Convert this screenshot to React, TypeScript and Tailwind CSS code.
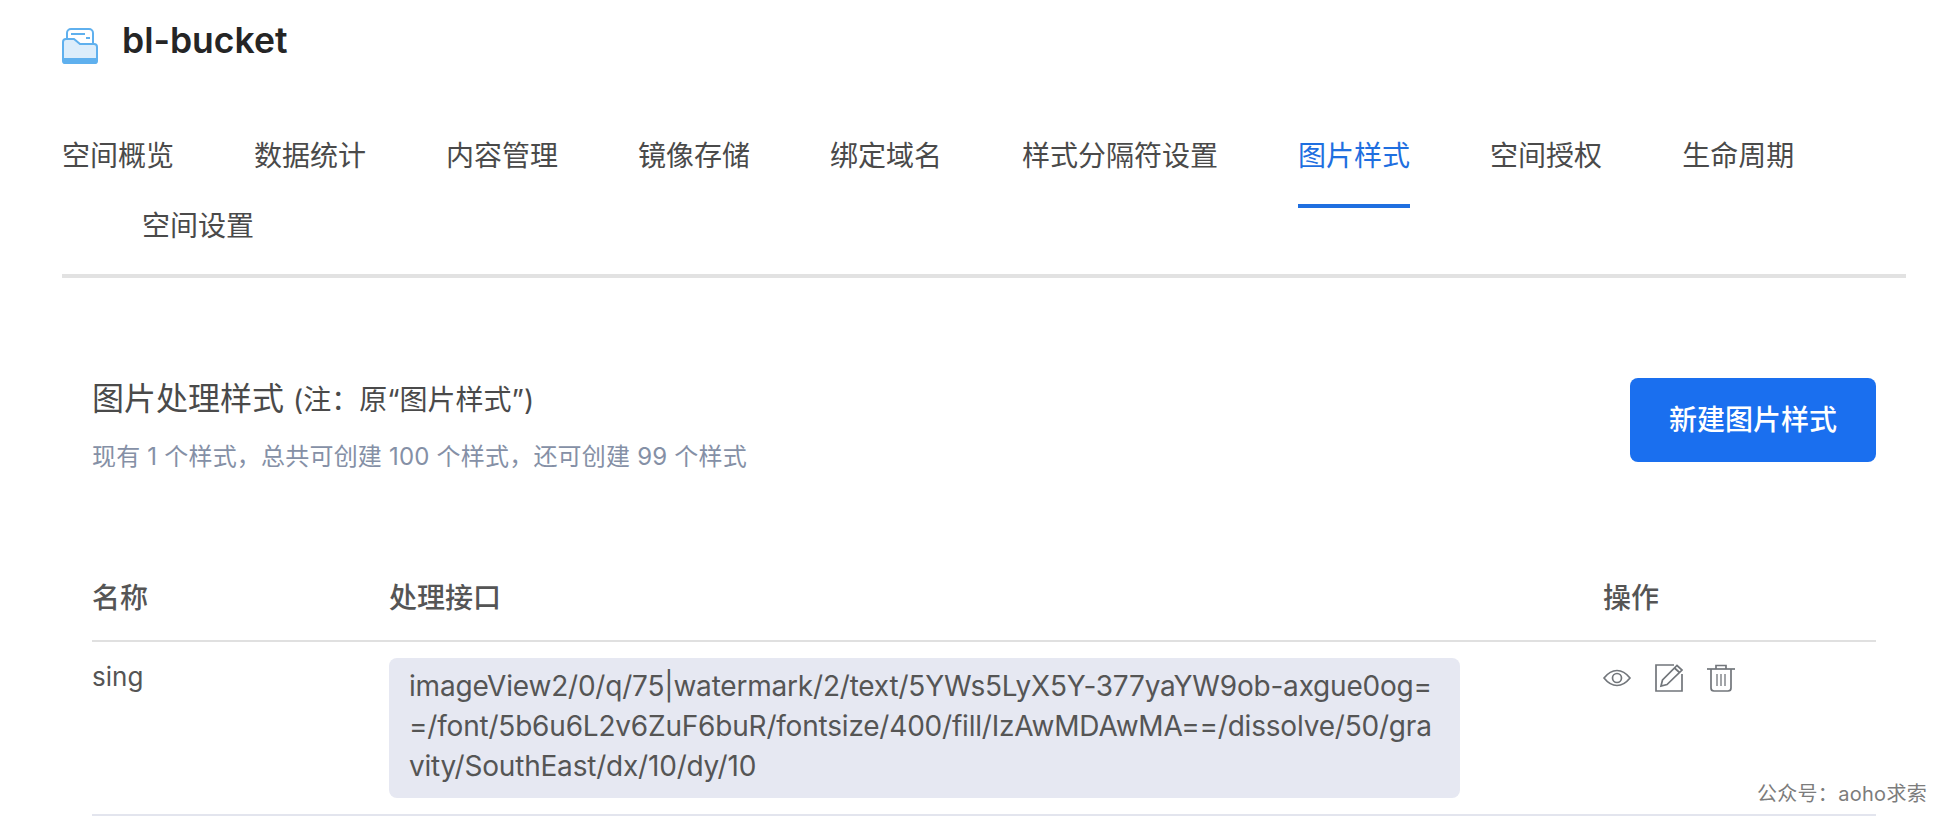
/**
 * Bucket page - image styles tab
 */

const FONT = 'font-["Inter","Noto_Sans_CJK_SC",sans-serif]';

const tabs = ['空间概览', '数据统计', '内容管理', '镜像存储', '绑定域名', '样式分隔符设置', '图片样式', '空间授权', '生命周期', '空间设置'];

function BucketIcon() {
  return (
    <svg className="mt-[7px]" width="36" height="36" viewBox="0 0 36 36" fill="none">
      <rect x="5" y="1" width="26" height="18" rx="4" fill="#fff" stroke="#5fb0ee" strokeWidth="2" />
      <path d="M9 6h14" stroke="#5fb0ee" strokeWidth="2" />
      <path d="M24 10h4" stroke="#5fb0ee" strokeWidth="2" />
      <path d="M1 14a3 3 0 0 1 3-3h8l6 5h14a3 3 0 0 1 3 3v14a2 2 0 0 1-2 2H3a2 2 0 0 1-2-2z" fill="#dcedfb" stroke="#5fb0ee" strokeWidth="2" />
      <path d="M1 30h34v4a2 2 0 0 1-2 2H3a2 2 0 0 1-2-2z" fill="#5fb0ee" />
    </svg>
  );
}

function EyeIcon() {
  return (
    <svg width="28" height="18" viewBox="0 0 28 18" fill="none" stroke="#72767b" strokeWidth="1.7">
      <path d="M1 9C5 4 9 1.500 14 1.500S23 4 27 9c-4 5-8 7.500-13 7.500S5 14 1 9z" />
      <circle cx="14" cy="9" r="4.500" />
    </svg>
  );
}

function EditIcon() {
  return (
    <svg width="28" height="28" viewBox="0 0 28 28" fill="none" stroke="#72767b" strokeWidth="1.7">
      <path d="M19 1H1v26h26V10" />
      <path d="M6 22l1.500-6L22 1.500 27 6 12 20.500z" />
      <path d="M19.500 4l5 4.500" />
    </svg>
  );
}

function TrashIcon() {
  return (
    <svg width="28" height="28" viewBox="0 0 28 28" fill="none" stroke="#72767b" strokeWidth="1.7">
      <path d="M0 5h28" />
      <path d="M9 5V1.500h10V5" />
      <path d="M4 5v19a3 3 0 0 0 3 3h14a3 3 0 0 0 3-3V5" />
      <path d="M10 10v12M14 10v12M18 10v12" strokeWidth="1.300" />
    </svg>
  );
}

export default function App() {
  return (
    <div className={`${FONT} relative w-[1938px] h-[816px] overflow-hidden bg-white pl-[62px] pr-[32px] text-[#333]`}>
      {/* Header */}
      <div className="flex items-center h-[84px]">
        <BucketIcon />
        <h1 className="ml-[24px] text-[35.500px] font-semibold text-[#252525] leading-none -mt-[2px]">bl-bucket</h1>
      </div>

      {/* Tabs */}
      <div className="flex flex-wrap border-b-[4px] border-[#e2e2e2] h-[194px] pt-[37px] content-start">
        {tabs.map((t, i) => (
          <div
            key={t}
            className={`relative h-[70px] flex items-center text-[28px] leading-none ${i === 6 ? 'text-[#1f6fe0]' : 'text-[#4a4a4a]'} ${i === 9 ? 'ml-[80px]' : ''} ${i < 8 ? 'mr-[80px]' : ''}`}
          >
            {t}
            {i === 6 && <span className="absolute left-0 right-0 top-[83px] h-[4px] bg-[#1f6fe0]" />}
          </div>
        ))}
      </div>

      {/* Title row */}
      <div className="flex justify-between items-start pl-[30px] pr-[30px] mt-[100px]">
        <div className="pt-[5px]">
          <div className="text-[32px] leading-none text-[#4a4a4a]">
            图片处理样式 <span className="text-[28px]">(注：原“图片样式”)</span>
          </div>
          <div className="mt-[30px] text-[24px] leading-none tracking-[0.2px] text-[#8590a6]">现有 1 个样式，总共可创建 100 个样式，还可创建 99 个样式</div>
        </div>
        <button className="w-[246px] h-[84px] rounded-[8px] bg-[#1a6fef] text-white text-[28px] font-medium">新建图片样式</button>
      </div>

      {/* Table */}
      <div className="ml-[30px] mr-[30px] mt-[87px]">
        <div className="flex h-[86px] items-center border-b-[2px] border-[#e0e0e0] text-[28px] font-medium text-[#555]">
          <div className="w-[297px]">名称</div>
          <div className="flex-1">处理接口</div>
          <div className="w-[273px]">操作</div>
        </div>
        <div className="flex border-b-[2px] border-[#e3e5ee] h-[174px] pt-[16px]">
          <div className="w-[297px] text-[26px] leading-[38px] text-[#555]">sing</div>
          <div className="flex-1">
            <div className="w-[1071px] h-[140px] rounded-[8px] bg-[#e6e8f2] px-[20px] py-[8px] text-[28px] tracking-[-0.2px] leading-[40px] text-[#555] break-all">
              imageView2/0/q/75|watermark/2/text/5YWs5LyX5Y-377yaYW9ob-axgue0og==/font/5b6u6L2v6ZuF6buR/fontsize/400/fill/IzAwMDAwMA==/dissolve/50/gravity/SouthEast/dx/10/dy/10
            </div>
          </div>
          <div className="w-[273px] flex items-center self-start gap-[24px] pt-[6px]">
            <EyeIcon />
            <EditIcon />
            <TrashIcon />
          </div>
        </div>
      </div>

      {/* Watermark */}
      <div className="absolute right-[11px] bottom-[12px] text-[20px] tracking-[0.3px] leading-none text-[#7c7c7c]">公众号：aoho求索</div>
    </div>
  );
}
